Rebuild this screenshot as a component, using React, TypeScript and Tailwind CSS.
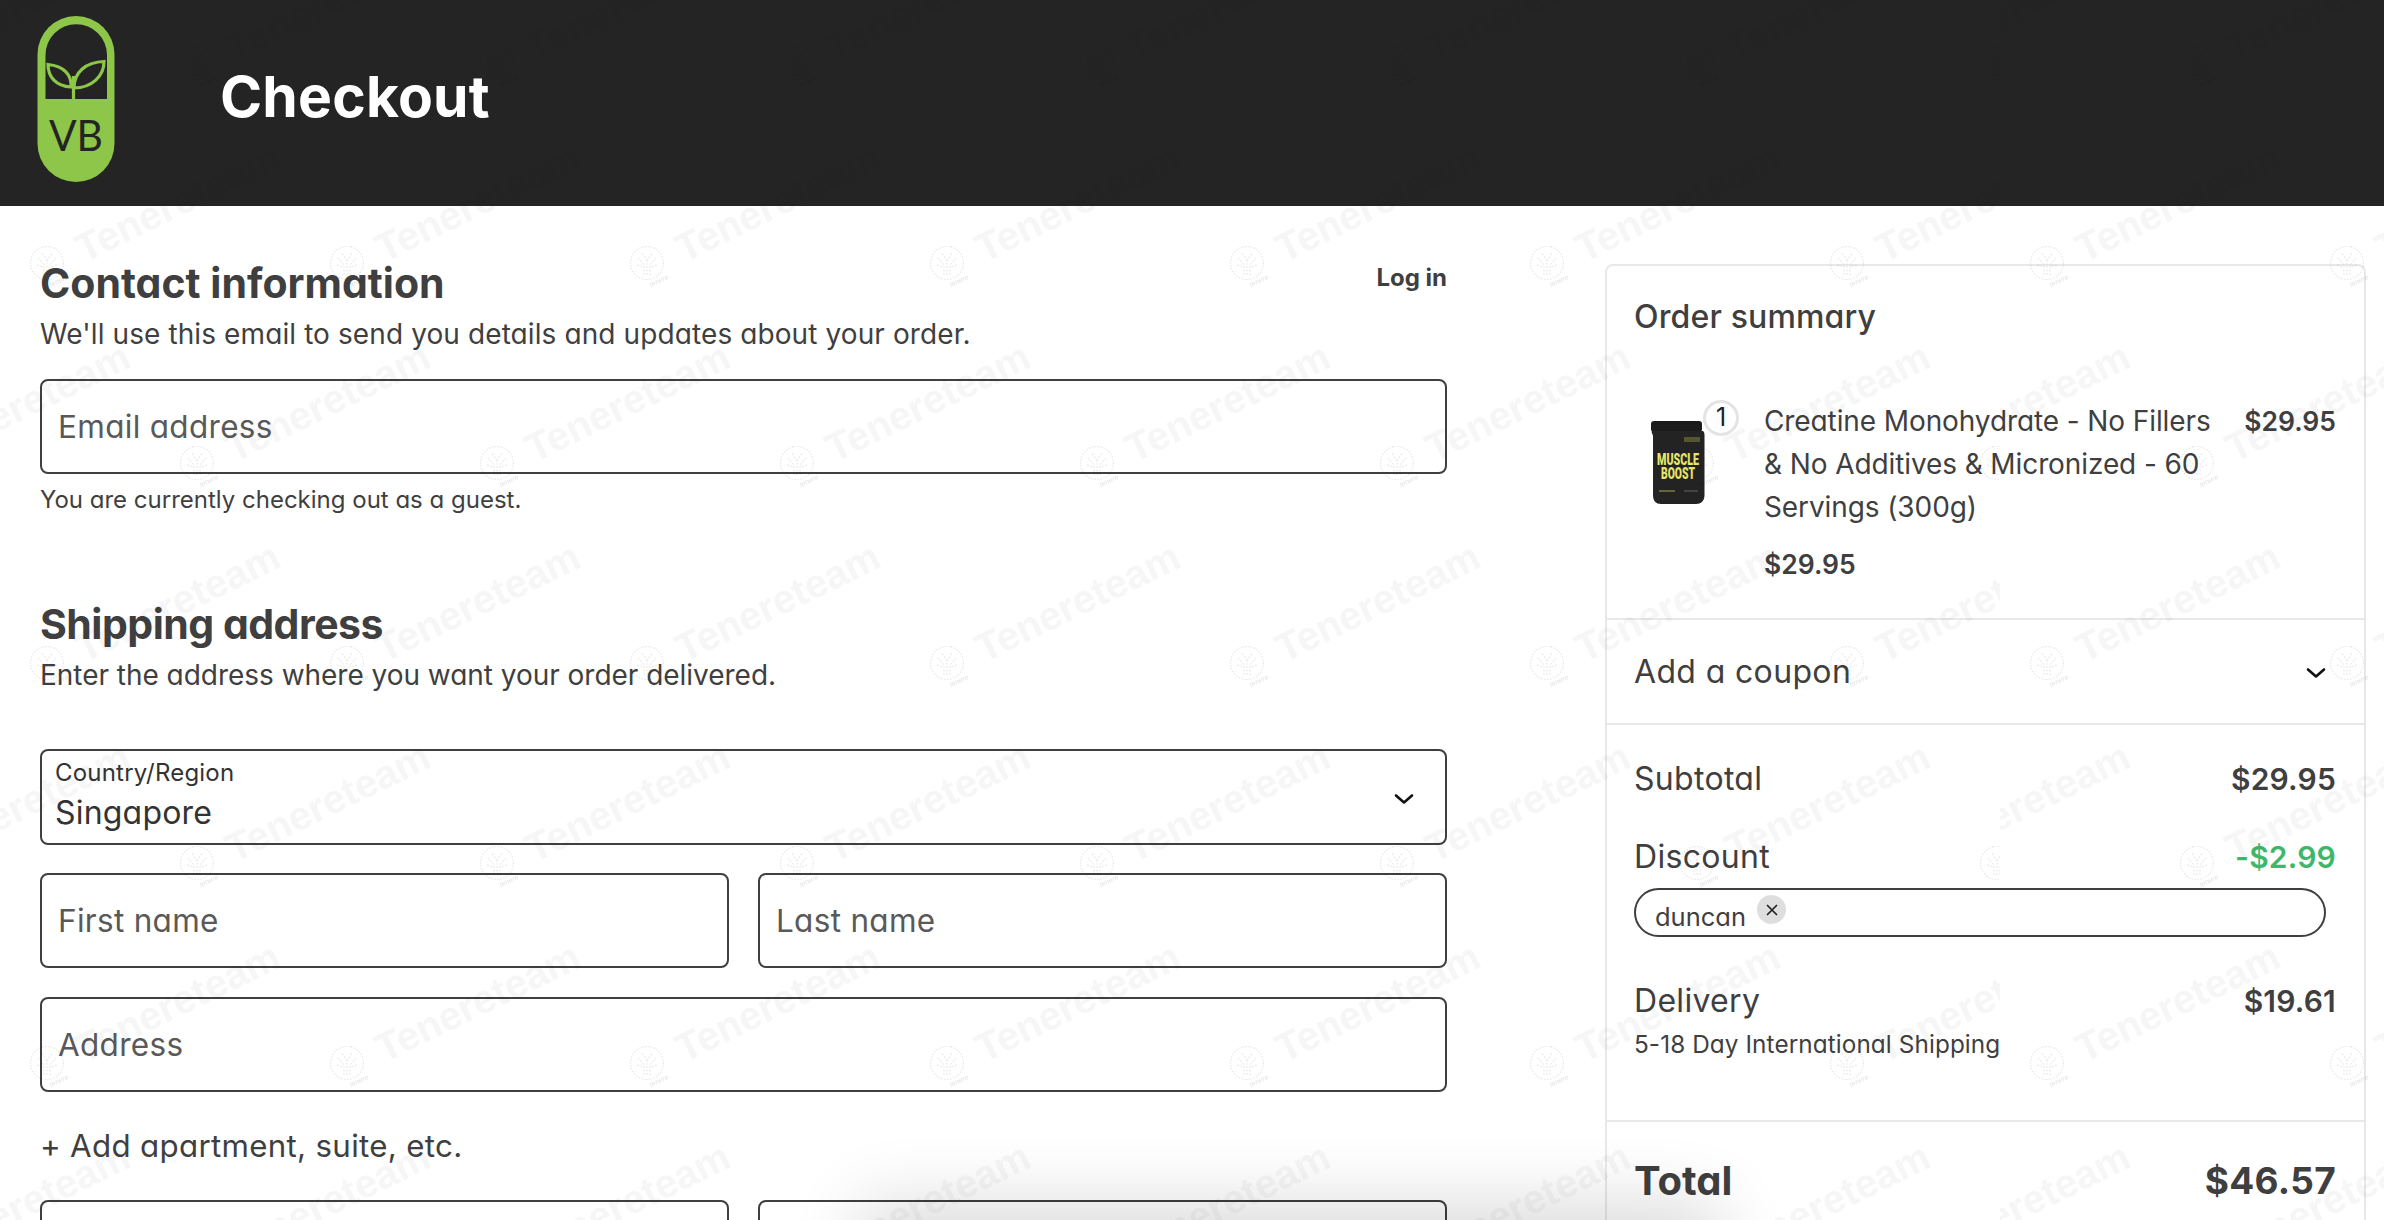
import React from "react";

const WM: [number, number][] = [
  [47, 263], [347, 263], [-253, 263], [197, 63], [-103, 63], [197, 463], [-103, 463], [47, -137], [47, 663],
];

function Mark({ x, y }: { x: number; y: number }) {
  return (
    <g transform={`translate(${x} ${y})`}>
      <circle r="16.5" fill="none" stroke="#000" strokeOpacity="0.09" strokeWidth="1.2" strokeDasharray="1.5 1.5" />
      <g fill="none" stroke="#000" strokeOpacity="0.08" strokeWidth="1.2" strokeDasharray="2 1.5">
        <path d="M0 12V-2M-3 12V2L-9 -5M3 12V2L9 -5M0 -2L-5 -10M0 -2L5 -10M-10 2L-4 4M10 2L4 4" />
      </g>
      <text x="4" y="24" fontSize="7" fontStyle="italic" fill="#000" fillOpacity="0.12" fontFamily="'Liberation Sans',sans-serif" transform="rotate(-25 4 24)">tenere</text>
      <text x="37" y="0" fontSize="40" fontWeight="700" fill="#000" fillOpacity="0.035" fontFamily="'Liberation Sans',sans-serif" transform="rotate(-26 37 0)">Tenereteam</text>
    </g>
  );
}

function Watermark({ id, className }: { id: string; className: string }) {
  return (
    <svg className={className} aria-hidden="true">
      <defs>
        <pattern id={id} width="300" height="400" patternUnits="userSpaceOnUse">
          {WM.map(([x, y]) => (
            <Mark key={`${x}-${y}`} x={x} y={y} />
          ))}
        </pattern>
      </defs>
      <rect width="100%" height="100%" fill={`url(#${id})`} />
    </svg>
  );
}

function Logo() {
  return (
    <svg width="78" height="166" viewBox="37 16 78 166" className="shrink-0">
      <rect x="37.5" y="16" width="77" height="166" rx="38.5" fill="#8dc649" />
      <path d="M45.5 99V55A30.75 30.75 0 0 1 107 55V99Z" fill="#242424" />
      <g fill="none" stroke="#8dc649" strokeWidth="3.2">
        <path d="M74 88C74 72 86 62 104 61.5C104 76 92 88 74 88Z" />
        <path d="M71 87C72 75 64 66 48 64.5C48 77 56 86 71 87Z" />
        <path d="M73.5 99.5V76" />
      </g>
      <text x="49" y="151" fontSize="43" fill="#242424" fontFamily="Lato, sans-serif" textLength="54" lengthAdjust="spacingAndGlyphs">VB</text>
    </svg>
  );
}

function Jar() {
  return (
    <svg width="56" height="84" viewBox="0 0 56 84" className="shrink-0">
      <rect x="1" y="0" width="51" height="11" rx="3" fill="#1b1b1b" />
      <path d="M2 10H53C54.5 11 54.5 13 54.5 15V74C54.5 80 51 83 46 83H11C6 83 3 80 3 74V15C3 13 1 12 2 10Z" fill="#232323" />
      <text x="28" y="44" textAnchor="middle" fontSize="17" fontWeight="900" fill="#e6e66c" fontFamily="Roboto, sans-serif" textLength="42" lengthAdjust="spacingAndGlyphs">MUSCLE</text>
      <text x="28" y="57.5" textAnchor="middle" fontSize="17" fontWeight="900" fill="#e6e66c" fontFamily="Roboto, sans-serif" textLength="34" lengthAdjust="spacingAndGlyphs">BOOST</text>
      <rect x="34" y="16" width="16" height="5" fill="#55552f" />
      <rect x="9" y="69" width="16" height="2" fill="#66663a" />
      <rect x="34" y="69" width="14" height="2" fill="#444" />
    </svg>
  );
}

function Chevron() {
  return (
    <svg width="20" height="12" viewBox="0 0 20 12" fill="none" stroke="#111" strokeWidth="2.6" strokeLinecap="round" strokeLinejoin="round" className="shrink-0">
      <path d="M2 2.5L10 9.5L18 2.5" />
    </svg>
  );
}

function Field({ label, className = "" }: { label: string; className?: string }) {
  return (
    <div className={`flex h-[95px] items-center rounded-lg border-2 border-[#3f3f3f] pl-[16px] text-[31.5px] tracking-[0.3px] text-[#595959] ${className}`}>
      {label}
    </div>
  );
}

function Row({ left, right, rightClass = "text-[#3f3f3f]" }: { left: string; right: string; rightClass?: string }) {
  return (
    <div className="flex items-center justify-between">
      <span className="text-[32px] tracking-[0.3px] text-[#3f3f3f]">{left}</span>
      <span className={`text-[30px] font-semibold tracking-[0.2px] ${rightClass}`}>{right}</span>
    </div>
  );
}

export default function App() {
  return (
    <div className="relative h-[1220px] w-[2384px] overflow-hidden bg-white font-['Inter','Noto_Sans',sans-serif] [font-feature-settings:'cv11'] text-[#3f3f3f]">
      <header className="flex h-[206px] items-start bg-[#242424] pl-[37px] pt-[16px]">
        <Logo />
        <h1 className="ml-[105px] mt-[41px] text-[57px] font-bold leading-[80px] tracking-[0.2px] text-white">Checkout</h1>
      </header>

      <main className="flex h-[1014px] items-start">
        <section className="ml-[40px] mr-[158px] w-[1407px] shrink-0">
          <div className="flex items-start justify-between pt-[55px]">
            <h2 className="text-[41px] font-bold leading-[44px]">Contact information</h2>
            <span className="pt-[1px] text-[24px] font-bold leading-[32px]">Log in</span>
          </div>
          <p className="mt-[9px] text-[28px] leading-[40px] tracking-[0.1px]">We'll use this email to send you details and updates about your order.</p>
          <Field label="Email address" className="mt-[25px]" />
          <p className="mt-[9px] text-[24px] leading-[34px]">You are currently checking out as a guest.</p>

          <h2 className="mt-[85px] text-[41px] font-bold leading-[44px] tracking-[-0.5px]">Shipping address</h2>
          <p className="mt-[9px] text-[28px] leading-[40px] tracking-[-0.03px]">Enter the address where you want your order delivered.</p>

          <div className="mt-[54px] flex h-[96px] items-center justify-between rounded-lg border-2 border-[#3f3f3f] pl-[13px] pr-[31px]">
            <div className="-mt-[3px]">
              <div className="text-[24px] leading-[30px] tracking-[0.2px] text-[#333]">Country/Region</div>
              <div className="mt-[5px] text-[32px] leading-[40px] tracking-[0.2px] text-[#333]">Singapore</div>
            </div>
            <div className="pt-[3px]"><Chevron /></div>
          </div>

          <div className="mt-[28px] grid grid-cols-2 gap-[29px]">
            <Field label="First name" />
            <Field label="Last name" />
          </div>
          <Field label="Address" className="mt-[29px]" />
          <div className="mt-[32px] text-[31.3px] leading-[44px] tracking-[0.3px]">+ Add apartment, suite, etc.</div>
          <div className="mt-[32px] grid grid-cols-2 gap-[29px]">
            <Field label="City" />
            <Field label="Postal code" />
          </div>
        </section>

        <aside className="relative mt-[58px] h-[1100px] w-[761px] shrink-0 rounded-lg border-2 border-[#e8e8e8]">
          <div className="px-[27px] pt-[29px] text-[32px] font-medium leading-[44px] tracking-[0.15px]">Order summary</div>

          <div className="flex items-start pl-[43px] pr-[28px] pt-[61px]">
            <div className="relative mt-[21px] h-[84px] w-[56px] shrink-0">
              <Jar />
              <div className="absolute -right-[33px] -top-[21px] flex h-[36px] w-[36px] items-center justify-center rounded-full border-[3px] border-[#e4e4e4] bg-white text-[25px] font-normal text-[#222]">1</div>
            </div>
            <div className="ml-[58px] w-[455px] shrink-0">
              <p className="text-[28px] leading-[43px] tracking-[-0.1px]">Creatine Monohydrate - No Fillers &amp; No Additives &amp; Micronized - 60 Servings (300g)</p>
              <p className="mt-[14px] text-[26.5px] font-semibold leading-[43px]">$29.95</p>
            </div>
            <div className="ml-auto text-[26.5px] font-semibold leading-[43px]">$29.95</div>
          </div>

          <div className="mt-[32px] flex h-[107px] items-center justify-between border-y-2 border-[#e8e8e8] pl-[27px] pr-[38px]">
            <span className="text-[32px] tracking-[0.35px]">Add a coupon</span>
            <div className="pt-[3px]"><Chevron /></div>
          </div>

          <div className="pl-[27px] pr-[28px] pt-[30px]">
            <div className="h-[44px]"><Row left="Subtotal" right="$29.95" /></div>
            <div className="mt-[34px] h-[44px]"><Row left="Discount" right="-$2.99" rightClass="text-[#3fb76b]" /></div>
            <div className="mr-[10px] mt-[11px] flex h-[49px] items-start rounded-full border-2 border-[#3f3f3f] pl-[19px]">
              <span className="mt-[9px] text-[25.5px] leading-[36px]">duncan</span>
              <span className="ml-[11px] mt-[5px] flex h-[29px] w-[29px] items-center justify-center rounded-full bg-[#dedede]">
                <svg width="12" height="12" viewBox="0 0 12 12" stroke="#222" strokeWidth="1.7" strokeLinecap="round"><path d="M1.5 1.5L10.5 10.5M10.5 1.5L1.5 10.5" /></svg>
              </span>
            </div>
            <div className="mt-[40px] h-[44px]"><Row left="Delivery" right="$19.61" /></div>
            <p className="mt-[1px] text-[24.3px] leading-[44px] tracking-[0.1px]">5-18 Day International Shipping</p>
          </div>

          <div className="mt-[54px] flex items-center justify-between border-t-2 border-[#e8e8e8] pl-[27px] pr-[28px] pt-[35px]">
            <span className="text-[40px] font-bold leading-[48px]">Total</span>
            <span className="text-[37px] font-bold leading-[48px] tracking-[0.3px]">$46.57</span>
          </div>
        </aside>
      </main>

      <div className="pointer-events-none absolute left-[880px] top-[1222px] h-[120px] w-[820px] shadow-[0_0_70px_20px_rgba(0,0,0,0.14)]" />
      <Watermark id="wm-left" className="pointer-events-none absolute left-0 top-0 h-[1220px] w-[2000px]" />
      <Watermark id="wm-right" className="pointer-events-none absolute left-[2000px] top-0 h-[1220px] w-[384px]" />
    </div>
  );
}
